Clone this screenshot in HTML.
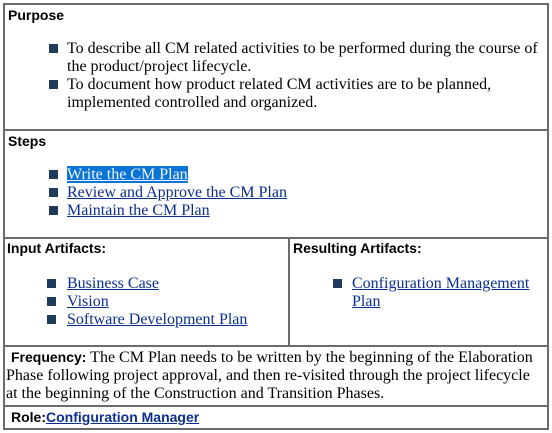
<!DOCTYPE html>
<html><head><style>
body{margin:0;width:552px;height:433px;background:#fff;position:relative;overflow:hidden}
.l{position:absolute;background:#6b6b6b}
.h{position:absolute;font:bold 14px "Liberation Sans",sans-serif;color:#000;white-space:nowrap}
.t{position:absolute;font:16px/18px "Liberation Serif",serif;color:#000;white-space:nowrap}
.b{position:absolute;width:9px;height:9px;background:#1f3b5c}
a{color:#0b2f8f;text-decoration:underline}
.s{background:#0a74d6;color:#f0f4ff}
</style></head><body>
<div class="l" style="left:3px;top:3px;width:546px;height:2px"></div>
<div class="l" style="left:3px;top:3px;width:2px;height:427px"></div>
<div class="l" style="left:547px;top:3px;width:2px;height:427px"></div>
<div class="l" style="left:3px;top:428px;width:546px;height:2px"></div>
<div class="l" style="left:3px;top:129px;width:546px;height:2px"></div>
<div class="l" style="left:3px;top:237px;width:546px;height:2px"></div>
<div class="l" style="left:3px;top:345px;width:546px;height:2px"></div>
<div class="l" style="left:3px;top:405px;width:546px;height:2px"></div>
<div class="l" style="left:288px;top:237px;width:2px;height:110px"></div>

<div class="h" style="left:8px;top:7px">Purpose</div>
<div class="b" style="left:49px;top:44px"></div>
<div class="t" style="left:67px;top:40px">To describe all CM related activities to be performed during the course of</div>
<div class="t" style="left:67px;top:58px">the product/project lifecycle.</div>
<div class="b" style="left:49px;top:80px"></div>
<div class="t" style="left:67px;top:76px">To document how product related CM activities are to be planned,</div>
<div class="t" style="left:67px;top:94px">implemented controlled and organized.</div>

<div class="h" style="left:8px;top:133px">Steps</div>
<div class="b" style="left:49px;top:170px"></div>
<div class="t" style="left:67px;top:166px"><a class="s">Write the CM Plan</a></div>
<div class="b" style="left:49px;top:188px"></div>
<div class="t" style="left:67px;top:184px"><a>Review and Approve the CM Plan</a></div>
<div class="b" style="left:49px;top:206px"></div>
<div class="t" style="left:67px;top:202px"><a>Maintain the CM Plan</a></div>

<div class="h" style="left:7px;top:240px">Input Artifacts:</div>
<div class="b" style="left:47px;top:279px"></div>
<div class="t" style="left:67px;top:275px"><a>Business Case</a></div>
<div class="b" style="left:47px;top:297px"></div>
<div class="t" style="left:67px;top:293px"><a>Vision</a></div>
<div class="b" style="left:47px;top:315px"></div>
<div class="t" style="left:67px;top:311px"><a>Software Development Plan</a></div>

<div class="h" style="left:293px;top:240px">Resulting Artifacts:</div>
<div class="b" style="left:333px;top:279px"></div>
<div class="t" style="left:352px;top:275px"><a>Configuration Management</a></div>
<div class="t" style="left:352px;top:293px"><a>Plan</a></div>

<div class="t" style="left:11px;top:349px"><b style="font:bold 14px 'Liberation Sans',sans-serif">Frequency:</b> The CM Plan needs to be written by the beginning of the Elaboration</div>
<div class="t" style="left:6px;top:367px">Phase following project approval, and then re-visited through the project lifecycle</div>
<div class="t" style="left:6px;top:385px">at the beginning of the Construction and Transition Phases.</div>

<div class="h" style="left:11px;top:409px">Role:<a>Configuration Manager</a></div>
</body></html>
